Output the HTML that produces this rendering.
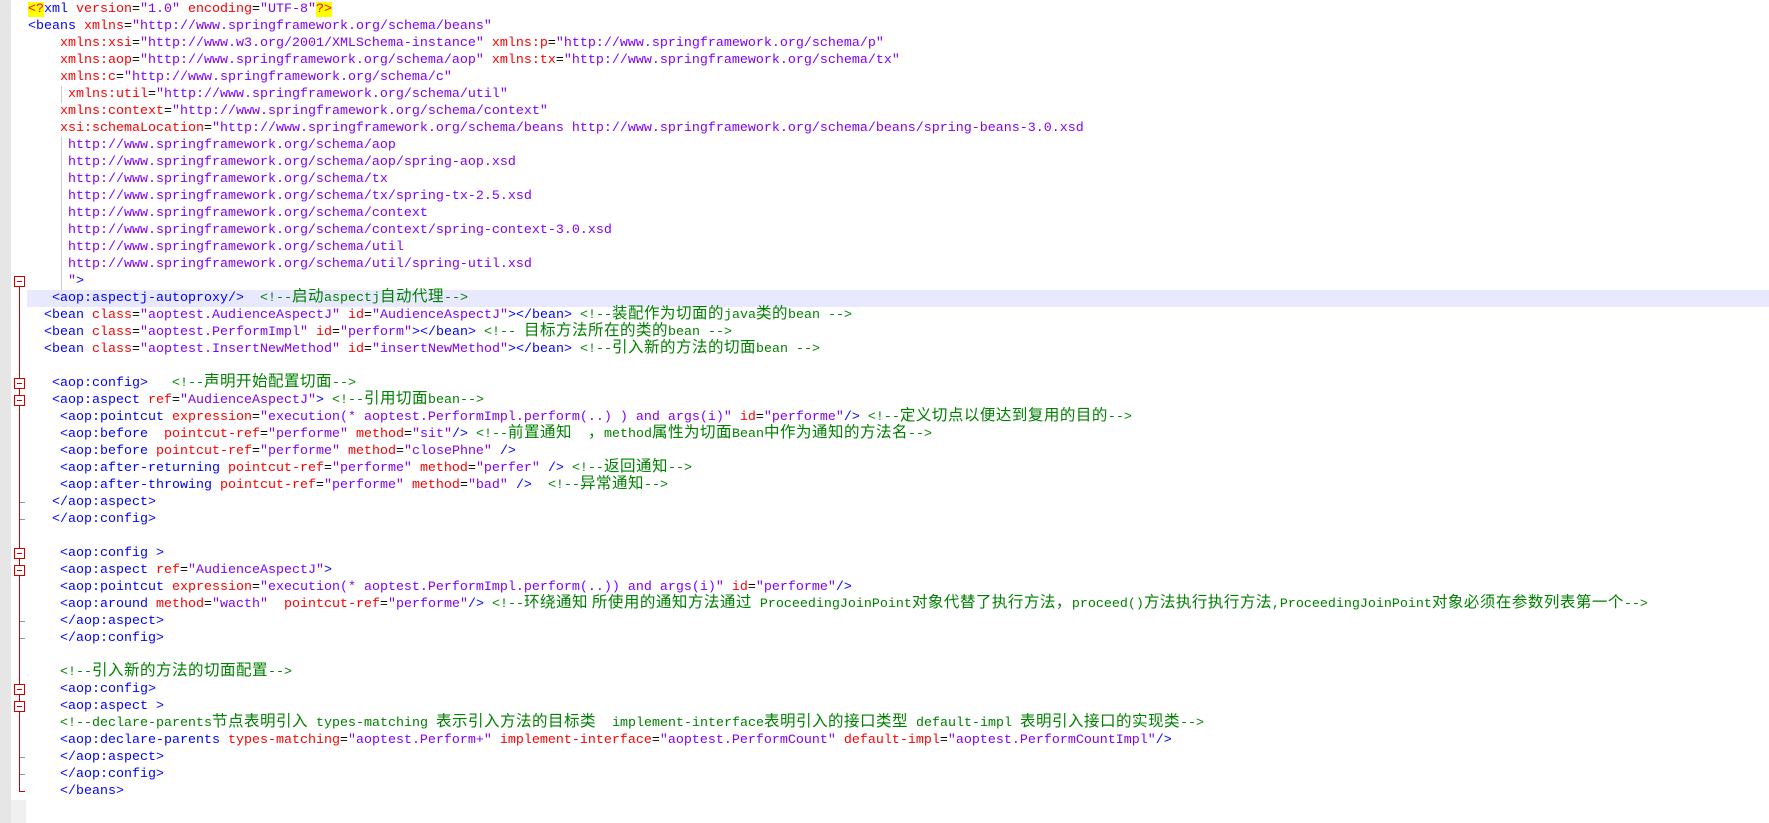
<!DOCTYPE html>
<html><head><meta charset="utf-8"><style>
html,body{margin:0;padding:0;background:#fff;width:1769px;height:823px;overflow:hidden}
#g1{position:absolute;left:0;top:0;width:11px;height:823px;background:#e6e6e6}
#g2{position:absolute;left:11px;top:800px;width:15px;height:23px;background:#f0f0f0}
.hl{position:absolute;left:27px;top:290px;width:1742px;height:17px;background:#e8e8ff}
#code{position:absolute;left:28px;top:1px;font-family:"Liberation Mono","Noto Sans CJK SC",monospace;font-size:13.33px;color:#000}
.l{height:17px;line-height:17px;white-space:pre;overflow:visible}
.t{color:#0000ff}.a{color:#ff0000}.v{color:#8000ff}.m{color:#008000}
.c{font-family:"Noto Sans CJK SC","WenQuanYi Zen Hei",sans-serif;font-size:15.5px;letter-spacing:0.5px;line-height:0}
.y{background:#ffff00;color:#ff0000}
.rl{position:absolute;left:19px;width:1px;background:#cc0000}
.bx{position:absolute;left:14px;width:9px;height:9px;border:1px solid #cc0000;background:#fff}
.bx:after{content:"";position:absolute;left:2px;top:4px;width:5px;height:1px;background:#cc0000}
.tk{position:absolute;left:20px;width:5px;height:1px;background:#999}
.ig{position:absolute;left:61px;width:1px;background:#ccc}
</style></head><body>
<div id="g1"></div><div id="g2"></div>
<div class="hl"></div>
<div class="rl" style="top:287px;height:504px"></div>
<div style="position:absolute;left:19px;top:791px;width:6px;height:1px;background:#cc0000"></div>
<div class="bx" style="top:276px"></div>
<div class="bx" style="top:378px"></div>
<div class="bx" style="top:395px"></div>
<div class="bx" style="top:548px"></div>
<div class="bx" style="top:565px"></div>
<div class="bx" style="top:684px"></div>
<div class="bx" style="top:701px"></div>
<div class="tk" style="top:502px"></div>
<div class="tk" style="top:519px"></div>
<div class="tk" style="top:621px"></div>
<div class="tk" style="top:638px"></div>
<div class="tk" style="top:757px"></div>
<div class="tk" style="top:774px"></div>
<div class="ig" style="top:86px;height:17px"></div>
<div class="ig" style="top:137px;height:153px"></div>
<div id="code">
<div class="l"><span class="y">&lt;?</span><span class="t">xml</span> <span class="a">version</span>=<span class="v">"1.0"</span> <span class="a">encoding</span>=<span class="v">"UTF-8"</span><span class="y">?&gt;</span></div>
<div class="l"><span class="t">&lt;beans</span> <span class="a">xmlns</span>=<span class="v">"http://www.springframework.org/schema/beans"</span></div>
<div class="l">    <span class="a">xmlns:xsi</span>=<span class="v">"http://www.w3.org/2001/XMLSchema-instance"</span> <span class="a">xmlns:p</span>=<span class="v">"http://www.springframework.org/schema/p"</span></div>
<div class="l">    <span class="a">xmlns:aop</span>=<span class="v">"http://www.springframework.org/schema/aop"</span> <span class="a">xmlns:tx</span>=<span class="v">"http://www.springframework.org/schema/tx"</span></div>
<div class="l">    <span class="a">xmlns:c</span>=<span class="v">"http://www.springframework.org/schema/c"</span></div>
<div class="l">     <span class="a">xmlns:util</span>=<span class="v">"http://www.springframework.org/schema/util"</span></div>
<div class="l">    <span class="a">xmlns:context</span>=<span class="v">"http://www.springframework.org/schema/context"</span></div>
<div class="l">    <span class="a">xsi:schemaLocation</span>=<span class="v">"http://www.springframework.org/schema/beans http://www.springframework.org/schema/beans/spring-beans-3.0.xsd</span></div>
<div class="l v">     http://www.springframework.org/schema/aop</div>
<div class="l v">     http://www.springframework.org/schema/aop/spring-aop.xsd</div>
<div class="l v">     http://www.springframework.org/schema/tx</div>
<div class="l v">     http://www.springframework.org/schema/tx/spring-tx-2.5.xsd</div>
<div class="l v">     http://www.springframework.org/schema/context</div>
<div class="l v">     http://www.springframework.org/schema/context/spring-context-3.0.xsd</div>
<div class="l v">     http://www.springframework.org/schema/util</div>
<div class="l v">     http://www.springframework.org/schema/util/spring-util.xsd</div>
<div class="l">     <span class="v">"</span><span class="t">&gt;</span></div>
<div class="l">   <span class="t">&lt;aop:aspectj-autoproxy/&gt;</span>  <span class="m">&lt;!--<span class="c">启动</span>aspectj<span class="c">自动代理</span>--&gt;</span></div>
<div class="l">  <span class="t">&lt;bean</span> <span class="a">class</span>=<span class="v">"aoptest.AudienceAspectJ"</span> <span class="a">id</span>=<span class="v">"AudienceAspectJ"</span><span class="t">&gt;&lt;/bean&gt;</span> <span class="m">&lt;!--<span class="c">装配作为切面的</span>java<span class="c">类的</span>bean --&gt;</span></div>
<div class="l">  <span class="t">&lt;bean</span> <span class="a">class</span>=<span class="v">"aoptest.PerformImpl"</span> <span class="a">id</span>=<span class="v">"perform"</span><span class="t">&gt;&lt;/bean&gt;</span> <span class="m">&lt;!-- <span class="c">目标方法所在的类的</span>bean --&gt;</span></div>
<div class="l">  <span class="t">&lt;bean</span> <span class="a">class</span>=<span class="v">"aoptest.InsertNewMethod"</span> <span class="a">id</span>=<span class="v">"insertNewMethod"</span><span class="t">&gt;&lt;/bean&gt;</span> <span class="m">&lt;!--<span class="c">引入新的方法的切面</span>bean --&gt;</span></div>
<div class="l"> </div>
<div class="l">   <span class="t">&lt;aop:config&gt;</span>   <span class="m">&lt;!--<span class="c">声明开始配置切面</span>--&gt;</span></div>
<div class="l">   <span class="t">&lt;aop:aspect</span> <span class="a">ref</span>=<span class="v">"AudienceAspectJ"</span><span class="t">&gt;</span> <span class="m">&lt;!--<span class="c">引用切面</span>bean--&gt;</span></div>
<div class="l">    <span class="t">&lt;aop:pointcut</span> <span class="a">expression</span>=<span class="v">"execution(* aoptest.PerformImpl.perform(..) ) and args(i)"</span> <span class="a">id</span>=<span class="v">"performe"</span><span class="t">/&gt;</span> <span class="m">&lt;!--<span class="c">定义切点以便达到复用的目的</span>--&gt;</span></div>
<div class="l">    <span class="t">&lt;aop:before</span>  <span class="a">pointcut-ref</span>=<span class="v">"performe"</span> <span class="a">method</span>=<span class="v">"sit"</span><span class="t">/&gt;</span> <span class="m">&lt;!--<span class="c">前置通知</span>  <span class="c">，</span>method<span class="c">属性为切面</span>Bean<span class="c">中作为通知的方法名</span>--&gt;</span></div>
<div class="l">    <span class="t">&lt;aop:before</span> <span class="a">pointcut-ref</span>=<span class="v">"performe"</span> <span class="a">method</span>=<span class="v">"closePhne"</span> <span class="t">/&gt;</span></div>
<div class="l">    <span class="t">&lt;aop:after-returning</span> <span class="a">pointcut-ref</span>=<span class="v">"performe"</span> <span class="a">method</span>=<span class="v">"perfer"</span> <span class="t">/&gt;</span> <span class="m">&lt;!--<span class="c">返回通知</span>--&gt;</span></div>
<div class="l">    <span class="t">&lt;aop:after-throwing</span> <span class="a">pointcut-ref</span>=<span class="v">"performe"</span> <span class="a">method</span>=<span class="v">"bad"</span> <span class="t">/&gt;</span>  <span class="m">&lt;!--<span class="c">异常通知</span>--&gt;</span></div>
<div class="l">   <span class="t">&lt;/aop:aspect&gt;</span></div>
<div class="l">   <span class="t">&lt;/aop:config&gt;</span></div>
<div class="l"> </div>
<div class="l">    <span class="t">&lt;aop:config &gt;</span></div>
<div class="l">    <span class="t">&lt;aop:aspect</span> <span class="a">ref</span>=<span class="v">"AudienceAspectJ"</span><span class="t">&gt;</span></div>
<div class="l">    <span class="t">&lt;aop:pointcut</span> <span class="a">expression</span>=<span class="v">"execution(* aoptest.PerformImpl.perform(..)) and args(i)"</span> <span class="a">id</span>=<span class="v">"performe"</span><span class="t">/&gt;</span></div>
<div class="l">    <span class="t">&lt;aop:around</span> <span class="a">method</span>=<span class="v">"wacth"</span>  <span class="a">pointcut-ref</span>=<span class="v">"performe"</span><span class="t">/&gt;</span> <span class="m">&lt;!--<span class="c">环绕通知 所使用的通知方法通过</span> ProceedingJoinPoint<span class="c">对象代替了执行方法，</span>proceed()<span class="c">方法执行执行方法</span>,ProceedingJoinPoint<span class="c">对象必须在参数列表第一个</span>--&gt;</span></div>
<div class="l">    <span class="t">&lt;/aop:aspect&gt;</span></div>
<div class="l">    <span class="t">&lt;/aop:config&gt;</span></div>
<div class="l"> </div>
<div class="l">    <span class="m">&lt;!--<span class="c">引入新的方法的切面配置</span>--&gt;</span></div>
<div class="l">    <span class="t">&lt;aop:config&gt;</span></div>
<div class="l">    <span class="t">&lt;aop:aspect &gt;</span></div>
<div class="l">    <span class="m">&lt;!--declare-parents<span class="c">节点表明引入</span> types-matching <span class="c">表示引入方法的目标类</span>  implement-interface<span class="c">表明引入的接口类型</span> default-impl <span class="c">表明引入接口的实现类</span>--&gt;</span></div>
<div class="l">    <span class="t">&lt;aop:declare-parents</span> <span class="a">types-matching</span>=<span class="v">"aoptest.Perform+"</span> <span class="a">implement-interface</span>=<span class="v">"aoptest.PerformCount"</span> <span class="a">default-impl</span>=<span class="v">"aoptest.PerformCountImpl"</span><span class="t">/&gt;</span></div>
<div class="l">    <span class="t">&lt;/aop:aspect&gt;</span></div>
<div class="l">    <span class="t">&lt;/aop:config&gt;</span></div>
<div class="l">    <span class="t">&lt;/beans&gt;</span></div>
</div>
</body></html>
